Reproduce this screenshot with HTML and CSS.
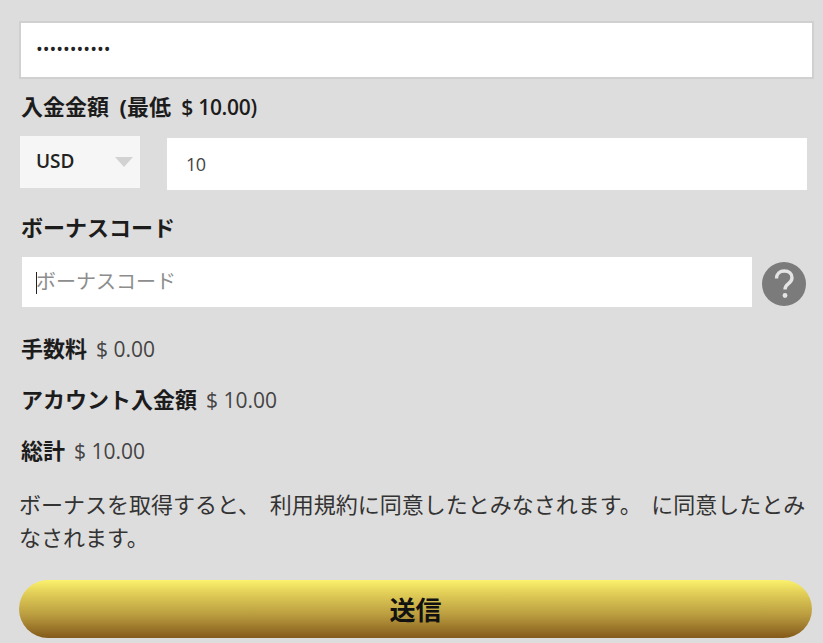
FILE: index.html
```html
<!DOCTYPE html>
<html lang="ja">
<head>
<meta charset="utf-8">
<title>入金</title>
<link rel="stylesheet" href="styles.css">
</head>
<body>
<form class="form">
  <div class="password"><input class="password-input" type="password" value="12345678901" aria-label="パスワード"></div>
  <div class="label label-amount">入金金額 &nbsp;<span class="paren">(</span>最低 &nbsp;<span class="min">$ 10.00)</span></div>
  <div class="amount-row">
    <div class="select"><span>USD</span><svg class="arrow" viewBox="0 0 18 10" width="18" height="10"><path d="M0 0H18L9 10Z" fill="#d2d2d2"/></svg></div>
    <input class="amount-input" type="text" value="10" aria-label="入金金額">
  </div>
  <div class="label label-bonus">ボーナスコード</div>
  <div class="bonus-row">
    <div class="bonus-field"><input class="bonus-input" type="text" placeholder="ボーナスコード" aria-label="ボーナスコード"><i class="caret"></i></div>
    <svg class="help" viewBox="0 0 44 44" width="44" height="44"><circle cx="22" cy="22" r="22" fill="#7b7b7b"/><path d="M14.500 16.500c0-4.600 3.300-7.500 7.800-7.500 4.600 0 7.700 2.800 7.700 6.700 0 3-1.600 4.600-3.800 6.200-2.200 1.600-3.200 2.800-3.200 5.600" fill="none" stroke="#e4e4e4" stroke-width="3.400"/><circle cx="23" cy="33.500" r="2.400" fill="#e4e4e4"/></svg>
  </div>
  <div class="summary fee"><b>手数料</b><span>$ 0.00</span></div>
  <div class="summary account"><b>アカウント入金額</b><span>$ 10.00</span></div>
  <div class="summary total"><b>総計</b><span>$ 10.00</span></div>
  <p class="terms">ボーナスを取得すると、 利用規約に同意したとみなされます。 に同意したとみなされます。</p>
  <button class="submit" type="button">送信</button>
</form>
</body>
</html>
```
FILE: styles.css
```css
* { box-sizing: border-box; }
html, body { margin: 0; height: 100%; }
body {
  width: 823px;
  height: 643px;
  overflow: hidden;
  background: #dedddd;
  color: #222;
  font-family: "Open Sans", "Noto Sans CJK JP", sans-serif;
  font-size: 20px;
}
.form { display: flex; flex-direction: column; padding: 21px 9px 0 19px; }
input { font-family: inherit; border: 0; outline: 0; background: #fff; border-radius: 0; }
.password { width: 795px; height: 58px; border: 2px solid #d0d0d0; background: #fff; display: flex; }
.password-input { flex: 1; min-width: 0; padding: 0 15px 2px; font-size: 18px; color: #222; font-weight: 400; }
.label { font-weight: 700; font-size: 22px; line-height: 28px; color: #1c1c1c; }
.label-amount { margin: 13px 0 0 2px; }
.paren { margin-left: -1px; }
.min { font-size: 21px; font-weight: 600; letter-spacing: -.3px; margin-left: -1px; }
.amount-row { display: flex; align-items: flex-start; margin: 15px 0 0 1px; }
.select { width: 120px; height: 52px; background: #f6f6f6; display: flex; align-items: center; justify-content: space-between; padding: 0 7px 0 16px; font-size: 19px; font-weight: 600; color: #222; }
.select span { position: relative; top: -1px; }
.amount-input { width: 640px; height: 52px; margin: 2px 0 0 27px; padding: 0 19px; font-size: 18px; letter-spacing: -.5px; color: #444; }
.label-bonus { margin: 23px 0 0 2px; }
.bonus-row { display: flex; align-items: flex-start; margin: 16px 0 0 3px; }
.bonus-field { position: relative; width: 730px; height: 50px; background: #fff; }
.bonus-input { width: 100%; height: 100%; padding: 0 14px 2px; font-size: 20px; color: #444; }
.bonus-input::placeholder { color: #8d8d8d; opacity: 1; }
.caret { position: absolute; left: 14px; top: 15px; width: 1px; height: 22px; background: #222; }
.help { margin: 5px 0 0 10px; flex: none; }
.summary { display: flex; align-items: baseline; gap: 9px; margin-left: 2px; font-size: 21px; line-height: 28px; color: #444; }
.summary b { color: #1c1c1c; font-size: 22px; font-weight: 700; }
.fee { margin-top: 27px; }
.account { margin-top: 22px; }
.total { margin-top: 22px; }
.terms { margin: 23px 0 0; width: 790px; font-size: 22px; line-height: 33px; word-spacing: 4px; color: #333; }
.submit {
  width: 793px;
  height: 58px;
  margin-top: 26px;
  border: 0;
  border-radius: 29px;
  background: linear-gradient(#fbf26c, #e2cf58 22%, #b89a3e 62%, #83591a);
  font-family: inherit;
  font-size: 26px;
  font-weight: 700;
  color: #111;
}
```
